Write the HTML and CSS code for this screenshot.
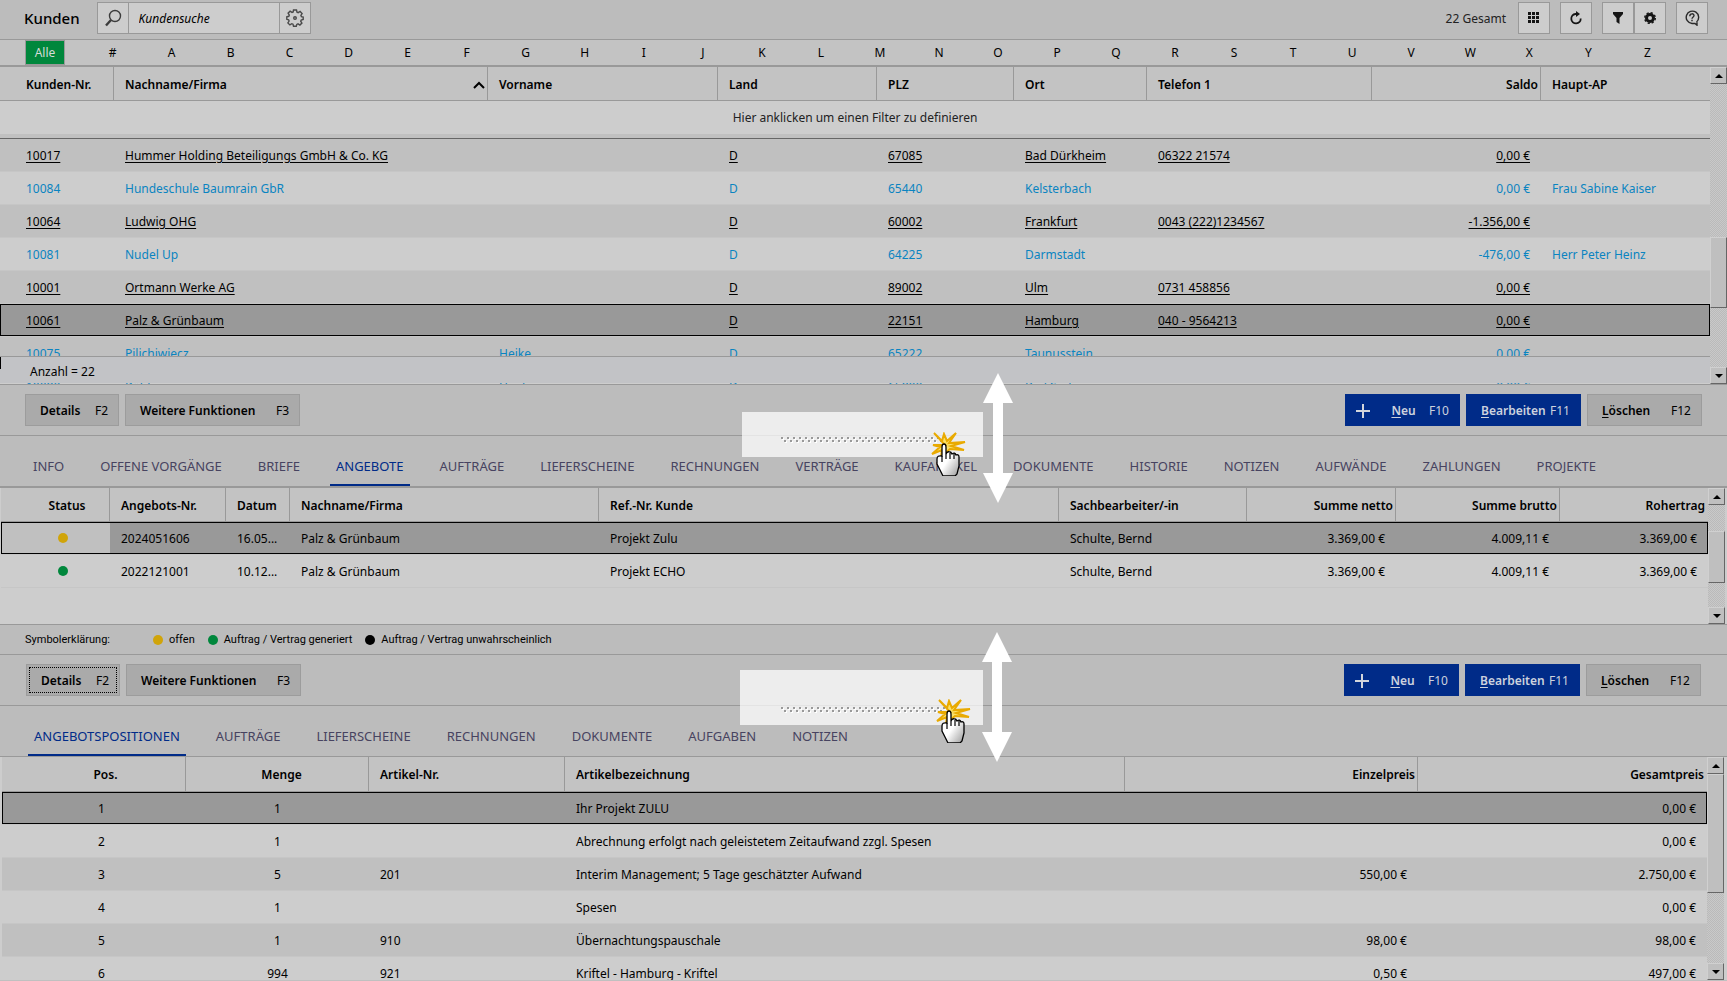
FILE: index.html
```html
<!DOCTYPE html>
<html lang="de">
<head>
<meta charset="utf-8">
<title>Kunden</title>
<link rel="stylesheet" href="styles.css">
</head>
<body>
<svg class="defs" aria-hidden="true">
  <defs>
    <pattern id="grip-dots" width="6" height="7" patternUnits="userSpaceOnUse">
      <path d="M1 1h2v2h-2zM4 4h2v2h-2z" fill="#fff"/>
      <path d="M0 0h2v2h-2zM3 3h2v2h-2z" fill="#999"/>
    </pattern>
    <linearGradient id="hand-fill" x1="0" y1="0" x2="1" y2="1">
      <stop offset=".5" stop-color="#fff"/><stop offset="1" stop-color="#999"/>
    </linearGradient>
    <symbol id="double-arrow" viewBox="0 0 30 130">
      <path d="M15 0 30 30H20V100H30L15 130 0 100H10V30H0Z" fill="#fff"/>
    </symbol>
    <symbol id="click-hand" viewBox="0 0 36 44">
      <path d="M14 13 3 1 11 9 13 2 16 9 25 1 18 11 34 10 20 14 33 18 19 17 10 25 11 18 1 22 9 15 2 13Z" fill="#fbe169" stroke="#e9aa00" stroke-width="2"/>
      <path d="M11 24V15q0-3 2-3t2 3v7q1-3 4-2 1 0 2 2 3-2 4 1 3-1 3 2v9l-2 8-2 2H12L9 38 6 32v-5q0-4 5-3Z" fill="url(#hand-fill)" stroke="#000" stroke-width="1.3"/>
      <path d="M11 24v6M15 22v5M19 21v6M23 22v5" fill="none" stroke="#000" stroke-width="1.2"/>
    </symbol>
    <symbol id="plus" viewBox="0 0 14 14"><path d="M7 0v14M0 7h14" stroke="#d2d5dc" stroke-width="2"/></symbol>
  </defs>
</svg>
<div class="app">
  <header class="topbar">
    <h1 class="title">Kunden</h1>
    <form class="search">
      <button class="icon-btn" type="button" aria-label="Suchen"><svg width="18" height="18" viewBox="0 0 18 18" fill="none" stroke="#3c3c3c"><circle cx="11" cy="7" r="5.5" stroke-width="1.4"/><path d="M7 11 2 16.500" stroke-width="2.400"/></svg></button>
      <input class="search-input" type="text" placeholder="Kundensuche" aria-label="Kundensuche">
      <button class="icon-btn" type="button" aria-label="Sucheinstellungen"><svg width="18" height="18" viewBox="0 0 18 18" fill="none" stroke="#4a4a4a" stroke-width="1.400"><path d="M7.500 1h3l.5 2.200 1.200.5 1.900-1.200 2 2-1.200 1.900.5 1.200 1.800.4v2.500l-2 .5-.5 1.200 1.200 1.900-2 2-1.900-1.200-1.200.5-.5 1.800h-2.800l-.5-2-1.200-.5-1.900 1.200-2-2 1.200-1.900-.5-1.200-1.800-.5v-2.500l2-.5.5-1.200-1.200-1.900 2-2 1.900 1.200 1.200-.5z"/><circle cx="9" cy="9" r="1.300"/></svg></button>
    </form>
    <span class="total">22 Gesamt</span>
    <div class="tools">
      <button class="icon-btn boxed" type="button" aria-label="Spalten"><svg width="12" height="12" viewBox="0 0 12 12" fill="#151515"><path d="M0 0h3v3H0zM4 0h3v3H4zM8 0h3v3H8zM0 4h3v3H0zM4 4h3v3H4zM8 4h3v3H8zM0 8h3v3H0zM4 8h3v3H4zM8 8h3v3H8z"/></svg></button>
      <button class="icon-btn boxed" type="button" aria-label="Aktualisieren"><svg width="14" height="14" viewBox="0 0 14 14" fill="none" stroke="#151515" stroke-width="1.800"><path d="M8 3H6.500a4.700 4.700 0 1 0 5.200 4.500"/><path d="M7 0v6l4-3z" fill="#151515" stroke="none"/></svg></button>
      <div class="pair">
        <button class="icon-btn boxed" type="button" aria-label="Filter"><svg width="12" height="12" viewBox="0 0 12 12" fill="#151515"><path d="M1 0h10v2L7.500 6v6L4.500 10V6L1 2z"/></svg></button>
        <button class="icon-btn boxed" type="button" aria-label="Einstellungen"><svg width="12" height="12" viewBox="0 0 12 12"><circle cx="6" cy="6" r="3.500" fill="none" stroke="#151515" stroke-width="3"/><circle cx="6" cy="6" r="5.300" fill="none" stroke="#151515" stroke-width="1.400" stroke-dasharray="2.200 1.960"/></svg></button>
      </div>
      <button class="icon-btn boxed" type="button" aria-label="Hilfe"><svg width="16" height="16" viewBox="0 0 16 16" fill="none" stroke="#2a2a2a" stroke-width="1.400"><path d="M12.500 12a6.200 6.200 0 1 0-4.500 1.500h3l2 1.700v-3"/><path d="M5.800 6.200C5.800 3 10.200 3.200 10 5.800 9.900 7 8 7 8 8.800M8 9.800v1.400"/></svg></button>
    </div>
  </header>

  <nav class="alphabet" aria-label="Anfangsbuchstabe">
    <button class="letter-all" type="button">Alle</button>
    <div class="letters">
      <button type="button">#</button><button type="button">A</button><button type="button">B</button><button type="button">C</button><button type="button">D</button><button type="button">E</button><button type="button">F</button><button type="button">G</button><button type="button">H</button><button type="button">I</button><button type="button">J</button><button type="button">K</button><button type="button">L</button><button type="button">M</button><button type="button">N</button><button type="button">O</button><button type="button">P</button><button type="button">Q</button><button type="button">R</button><button type="button">S</button><button type="button">T</button><button type="button">U</button><button type="button">V</button><button type="button">W</button><button type="button">X</button><button type="button">Y</button><button type="button">Z</button>
    </div>
  </nav>

  <section class="pane pane-customers">
    <div class="grid-area">
      <table class="grid customers">
        <colgroup><col class="c-nr"><col class="c-name"><col class="c-first"><col class="c-land"><col class="c-plz"><col class="c-ort"><col class="c-tel"><col class="c-saldo"><col></colgroup>
        <thead>
          <tr><th>Kunden-Nr.</th><th><span class="sorted">Nachname/Firma<svg width="12" height="8" viewBox="0 0 12 8" fill="none" stroke="#000" stroke-width="2"><path d="M1 7l5-5 5 5"/></svg></span></th><th>Vorname</th><th>Land</th><th>PLZ</th><th>Ort</th><th>Telefon 1</th><th class="num">Saldo</th><th>Haupt-AP</th></tr>
        </thead>
        <tbody>
          <tr class="filter"><td colspan="9">Hier anklicken um einen Filter zu definieren</td></tr>
          <tr class="alt firm"><td><a href="#">10017</a></td><td><a href="#">Hummer Holding Beteiligungs GmbH &amp; Co. KG</a></td><td></td><td><a href="#">D</a></td><td><a href="#">67085</a></td><td><a href="#">Bad Dürkheim</a></td><td><a href="#">06322 21574</a></td><td class="num"><a href="#">0,00 €</a></td><td></td></tr>
          <tr class="lead"><td>10084</td><td>Hundeschule Baumrain GbR</td><td></td><td>D</td><td>65440</td><td>Kelsterbach</td><td></td><td class="num">0,00 €</td><td>Frau Sabine Kaiser</td></tr>
          <tr class="alt firm"><td><a href="#">10064</a></td><td><a href="#">Ludwig OHG</a></td><td></td><td><a href="#">D</a></td><td><a href="#">60002</a></td><td><a href="#">Frankfurt</a></td><td><a href="#">0043 (222)1234567</a></td><td class="num"><a href="#">-1.356,00 €</a></td><td></td></tr>
          <tr class="lead"><td>10081</td><td>Nudel Up</td><td></td><td>D</td><td>64225</td><td>Darmstadt</td><td></td><td class="num">-476,00 €</td><td>Herr Peter Heinz</td></tr>
          <tr class="alt firm"><td><a href="#">10001</a></td><td><a href="#">Ortmann Werke AG</a></td><td></td><td><a href="#">D</a></td><td><a href="#">89002</a></td><td><a href="#">Ulm</a></td><td><a href="#">0731 458856</a></td><td class="num"><a href="#">0,00 €</a></td><td></td></tr>
          <tr class="selected firm"><td><a href="#">10061</a></td><td><a href="#">Palz &amp; Grünbaum</a></td><td></td><td><a href="#">D</a></td><td><a href="#">22151</a></td><td><a href="#">Hamburg</a></td><td><a href="#">040 - 9564213</a></td><td class="num"><a href="#">0,00 €</a></td><td></td></tr>
          <tr class="alt lead"><td>10075</td><td>Pilichiwiecz</td><td>Heike</td><td>D</td><td>65222</td><td>Taunusstein</td><td></td><td class="num">0,00 €</td><td></td></tr>
          <tr class="lead"><td>10080</td><td>Röhl</td><td>Heidi</td><td>D</td><td>65800</td><td>Bad Soden</td><td></td><td class="num">0,00 €</td><td></td></tr>
        </tbody>
      </table>
      <div class="summary">Anzahl = 22</div>
    </div>
    <div class="scrollbar" aria-hidden="true"><i class="up"></i><i class="space sp-153"></i><i class="thumb th-71"></i><i class="space grow"></i><i class="down"></i></div>
  </section>

  <section class="actions">
    <button class="btn" type="button"><b>Details</b><span>F2</span></button>
    <button class="btn wide" type="button"><b>Weitere Funktionen</b><span>F3</span></button>
    <div class="actions-right">
      <button class="btn primary new" type="button"><svg width="14" height="14"><use href="#plus"/></svg><b><u>N</u>eu</b><span>F10</span></button>
      <button class="btn primary" type="button"><b><u>B</u>earbeiten</b><span>F11</span></button>
      <button class="btn" type="button"><b><u>L</u>öschen</b><span>F12</span></button>
    </div>
    <div class="hint hint-top"><div class="spot"></div><svg class="grip" width="165" height="7"><rect width="165" height="7" fill="url(#grip-dots)"/></svg></div>
  </section>

  <nav class="tabs tabs-top">
    <a href="#">INFO</a><a href="#">OFFENE VORGÄNGE</a><a href="#">BRIEFE</a><a href="#" class="active">ANGEBOTE</a><a href="#">AUFTRÄGE</a><a href="#">LIEFERSCHEINE</a><a href="#">RECHNUNGEN</a><a href="#">VERTRÄGE</a><a href="#">KAUFARTIKEL</a><a href="#">DOKUMENTE</a><a href="#">HISTORIE</a><a href="#">NOTIZEN</a><a href="#">AUFWÄNDE</a><a href="#">ZAHLUNGEN</a><a href="#">PROJEKTE</a>
    <svg class="hand" width="36" height="44"><use href="#click-hand"/></svg>
    <svg class="arrow" width="30" height="130"><use href="#double-arrow"/></svg>
  </nav>

  <section class="pane pane-offers">
    <div class="grid-area">
      <table class="grid offers">
        <colgroup><col class="o-status"><col class="o-nr"><col class="o-date"><col class="o-name"><col class="o-ref"><col class="o-clerk"><col class="o-net"><col class="o-gross"><col></colgroup>
        <thead><tr><th>Status</th><th>Angebots-Nr.</th><th>Datum</th><th>Nachname/Firma</th><th>Ref.-Nr. Kunde</th><th>Sachbearbeiter/-in</th><th class="num">Summe netto</th><th class="num">Summe brutto</th><th class="num">Rohertrag</th></tr></thead>
        <tbody>
          <tr class="selected"><td><i class="dot yellow"></i></td><td>2024051606</td><td>16.05...</td><td>Palz &amp; Grünbaum</td><td>Projekt Zulu</td><td>Schulte, Bernd</td><td class="num">3.369,00 €</td><td class="num">4.009,11 €</td><td class="num">3.369,00 €</td></tr>
          <tr><td><i class="dot green"></i></td><td>2022121001</td><td>10.12...</td><td>Palz &amp; Grünbaum</td><td>Projekt ECHO</td><td>Schulte, Bernd</td><td class="num">3.369,00 €</td><td class="num">4.009,11 €</td><td class="num">3.369,00 €</td></tr>
        </tbody>
      </table>
    </div>
    <div class="scrollbar" aria-hidden="true"><i class="up"></i><i class="space sp-26"></i><i class="thumb th-52"></i><i class="space grow"></i><i class="down"></i></div>
  </section>

  <div class="legend"><span class="legend-title">Symbolerklärung:</span><span><i class="dot yellow"></i>offen</span><span><i class="dot green"></i>Auftrag / Vertrag generiert</span><span><i class="dot black"></i>Auftrag / Vertrag unwahrscheinlich</span></div>

  <section class="actions inset">
    <button class="btn focused" type="button"><b>Details</b><span>F2</span></button>
    <button class="btn wide" type="button"><b>Weitere Funktionen</b><span>F3</span></button>
    <div class="actions-right">
      <button class="btn primary new" type="button"><svg width="14" height="14"><use href="#plus"/></svg><b><u>N</u>eu</b><span>F10</span></button>
      <button class="btn primary" type="button"><b><u>B</u>earbeiten</b><span>F11</span></button>
      <button class="btn" type="button"><b><u>L</u>öschen</b><span>F12</span></button>
    </div>
    <div class="hint hint-bottom"><div class="spot"></div><svg class="grip" width="165" height="7"><rect width="165" height="7" fill="url(#grip-dots)"/></svg></div>
  </section>

  <nav class="tabs tabs-bottom inset">
    <a href="#" class="active">ANGEBOTSPOSITIONEN</a><a href="#">AUFTRÄGE</a><a href="#">LIEFERSCHEINE</a><a href="#">RECHNUNGEN</a><a href="#">DOKUMENTE</a><a href="#">AUFGABEN</a><a href="#">NOTIZEN</a>
    <svg class="hand" width="36" height="44"><use href="#click-hand"/></svg>
    <svg class="arrow" width="30" height="130"><use href="#double-arrow"/></svg>
  </nav>

  <section class="pane pane-items">
    <div class="grid-area">
      <table class="grid items">
        <colgroup><col class="i-pos"><col class="i-qty"><col class="i-nr"><col class="i-text"><col class="i-unit"><col></colgroup>
        <thead><tr><th>Pos.</th><th>Menge</th><th>Artikel-Nr.</th><th>Artikelbezeichnung</th><th class="num">Einzelpreis</th><th class="num">Gesamtpreis</th></tr></thead>
        <tbody>
          <tr class="selected"><td>1</td><td>1</td><td></td><td>Ihr Projekt ZULU</td><td></td><td class="num">0,00 €</td></tr>
          <tr><td>2</td><td>1</td><td></td><td>Abrechnung erfolgt nach geleistetem Zeitaufwand zzgl. Spesen</td><td></td><td class="num">0,00 €</td></tr>
          <tr class="alt"><td>3</td><td>5</td><td>201</td><td>Interim Management; 5 Tage geschätzter Aufwand</td><td class="num">550,00 €</td><td class="num">2.750,00 €</td></tr>
          <tr><td>4</td><td>1</td><td></td><td>Spesen</td><td></td><td class="num">0,00 €</td></tr>
          <tr class="alt"><td>5</td><td>1</td><td>910</td><td>Übernachtungspauschale</td><td class="num">98,00 €</td><td class="num">98,00 €</td></tr>
          <tr><td>6</td><td>994</td><td>921</td><td>Kriftel - Hamburg - Kriftel</td><td class="num">0,50 €</td><td class="num">497,00 €</td></tr>
        </tbody>
      </table>
    </div>
    <div class="scrollbar" aria-hidden="true"><i class="up"></i><i class="thumb th-119"></i><i class="space grow"></i><i class="down"></i></div>
  </section>
</div>
</body>
</html>
```
FILE: styles.css
```css
* { box-sizing: border-box; }
:root {
  --line: #999;
  --bar: #bcbcbc;
  --head: #c3c3c3;
  --light: #cdcdcd;
  --alt: #c0c0c0;
  --navy: #002b88;
}
body {
  margin: 0;
  background: var(--bar);
  color: #000;
  font-family: "Noto Sans", "Open Sans", sans-serif;
  font-size: 12px;
  line-height: 16px;
}
button, input { font: inherit; color: inherit; }
button { cursor: pointer; }
.defs { position: absolute; width: 0; height: 0; }
.app { display: flex; flex-direction: column; height: 100vh; overflow: hidden; }

.topbar { display: flex; align-items: center; flex: none; height: 40px; padding: 0 19px 4px 24px; border-bottom: 1px solid var(--line); }
.title { margin: 0; font-size: 15px; font-weight: 500; }
.search { display: flex; height: 32px; margin-left: 17px; border: 1px solid var(--line); background: var(--light); }
.icon-btn { display: flex; align-items: center; justify-content: center; width: 30px; padding: 0; border: 0; background: var(--light); }
.search-input { width: 152px; padding: 2px 10px 0; border: solid var(--line); border-width: 0 1px; border-radius: 0; background: var(--light); font-style: italic; outline: 0; }
.search-input::placeholder { color: #000; opacity: 1; }
.total { margin-left: auto; padding-top: 2px; color: #222; }
.tools { display: flex; gap: 10px; margin-left: 12px; }
.pair { display: flex; }
.boxed { width: 32px; height: 32px; border: 1px solid var(--line); }

.alphabet { display: flex; align-items: center; flex: none; height: 27px; padding: 0 50px 0 25px; border-bottom: 2px solid var(--line); background: var(--head); }
.alphabet button { padding: 0; border: 0; background: none; }
.alphabet .letter-all { width: 40px; height: 25px; border: 1px solid var(--line); background: #00873c; color: #d5dcd8; }
.letters { display: flex; flex: 1; margin-left: 18px; }
.letters button { flex: 1 1 0; }

.pane { display: flex; flex: none; border-bottom: 1px solid var(--line); background: var(--light); }
.pane-customers { height: 318px; }
.pane-offers { height: 137px; padding: 0 2px 0 1px; }
.pane-items { flex: 1; min-height: 0; padding: 0 3px 0 2px; border-bottom-color: var(--alt); }
.grid-area { position: relative; flex: 1; min-width: 0; overflow: hidden; }

.grid { width: 100%; table-layout: fixed; border-collapse: separate; border-spacing: 0; }
.grid th { height: 34px; padding: 2px 2px 0 11px; border: solid var(--line); border-width: 0 1px 1px 0; background: var(--head); font-weight: 600; text-align: left; white-space: nowrap; }
.grid th:last-child { border-right: 0; padding-right: 3px; }
.grid td { height: 33px; padding: 2px 11px 0; border-bottom: 1px solid #c6c6c6; white-space: nowrap; overflow: hidden; }
.grid .num { text-align: right; }
.grid a { color: inherit; text-underline-offset: 2px; }
.grid .alt td { background: var(--alt); }
.grid .selected td { background: #999; box-shadow: inset 0 1px #000, inset 0 -1px #000; }
.grid .selected td:first-child { box-shadow: inset 1px 1px #000, inset 0 -1px #000; }
.grid .selected td:last-child { box-shadow: inset 0 1px #000, inset -1px -1px #000; }
.grid .lead { color: #0a84c1; }

.customers th:first-child, .customers td:first-child { padding-left: 26px; }
.sorted { display: flex; align-items: center; justify-content: space-between; }
.customers .filter td { height: 38px; padding: 0 0 4px; border-bottom: 1px solid #666; text-align: center; color: #222; box-shadow: inset 0 -4px var(--alt); }
.c-nr { width: 114px; } .c-name { width: 374px; } .c-first { width: 230px; } .c-land { width: 159px; } .c-plz { width: 137px; } .c-ort { width: 133px; } .c-tel { width: 225px; } .c-saldo { width: 169px; }
.summary { position: absolute; right: 0; bottom: 1px; left: 0; height: 27px; padding: 7px 30px 0; border-top: 1px solid var(--line); background: #c2c3c6; }
.summary::before { content: ""; position: absolute; top: 0; left: 0; width: 1px; height: 12px; background: #000; }

.o-status { width: 109px; } .o-nr { width: 116px; } .o-date { width: 64px; } .o-name { width: 309px; } .o-ref { width: 460px; } .o-clerk { width: 188px; } .o-net { width: 149px; } .o-gross { width: 164px; }
.offers th:first-child { padding-left: 26px; text-align: center; }
.offers td:first-child { padding: 0 0 0 14px; text-align: center; }
.offers .selected td:first-child { background: var(--alt); }
.i-pos { width: 184px; } .i-qty { width: 183px; } .i-nr { width: 196px; } .i-text { width: 560px; } .i-unit { width: 293px; }
.grid.items th { height: 35px; }
.items th:nth-child(-n+2), .items td:nth-child(-n+2) { text-align: center; }
.items th:first-child, .items td:first-child { padding-left: 26px; }

.dot { display: block; width: 10px; height: 10px; border-radius: 50%; }
.offers .dot { margin: 0 auto; }
.yellow { background: #d0a40a; }
.green { background: #00873c; }
.black { background: #000; }

.scrollbar { display: flex; flex-direction: column; flex: none; width: 17px; background: repeating-conic-gradient(#c9c9c9 0 25%, #bababa 0 50%) 0 0 / 2px 2px; }
.up, .down, .thumb { flex: none; border: 1px solid; border-color: #d0d0d0 #666 #666 #d0d0d0; background: #bfbfbf; }
.up, .down { display: flex; align-items: center; justify-content: center; height: 17px; }
.up::before, .down::before { content: ""; border: 4px solid transparent; }
.up::before { border-top: 0; border-bottom-color: #000; }
.down::before { border-bottom: 0; border-top-color: #000; }
.space { flex: none; }
.sp-153 { height: 153px; } .sp-26 { height: 26px; }
.grow { flex: 1; }
.th-71 { height: 71px; } .th-52 { height: 52px; } .th-119 { height: 119px; }

.actions { position: relative; display: flex; align-items: center; gap: 6px; flex: none; height: 51px; padding: 0 25px; border-bottom: 1px solid var(--line); }
.actions.inset { padding: 0 26px; }
.actions-right { display: flex; gap: 6px; margin-left: auto; }
.btn { display: flex; align-items: center; justify-content: space-between; width: 94px; height: 32px; padding: 1px 10px 0 14px; border: 1px solid #9c9c9c; background: #aaa; white-space: nowrap; }
.btn b { font-weight: 600; }
.btn u { text-underline-offset: 2px; }
.btn.wide { width: 175px; }
.actions-right .btn { width: 115px; }
.btn.primary { border-color: var(--navy); background: var(--navy); color: #ccd2de; }
.btn.new { padding-left: 10px; }
.btn.new b { margin-left: 8px; }
.btn.focused { outline: 1px dotted #000; outline-offset: -4px; }

.hint { position: absolute; inset: 0; pointer-events: none; }
.spot { position: absolute; left: calc(50% - 122px); width: 241px; height: 45px; top: 27px; background: rgba(255, 255, 255, .73); }
.hint-bottom .spot { left: calc(50% - 124px); width: 243px; top: 15px; height: 55px; }
.grip { position: absolute; left: calc(50% - 83px); top: 52px; }
.hand, .arrow { position: absolute; pointer-events: none; z-index: 2; }

.tabs { position: relative; display: flex; align-items: stretch; gap: 24px; flex: none; height: 52px; padding-left: 27px; border-bottom: 2px solid var(--line); }
.tabs a { display: flex; align-items: center; padding: 12px 6px 0; border-bottom: 2px solid transparent; color: #474360; text-decoration: none; font-size: 13px; white-space: nowrap; }
.tabs a.active { border-color: var(--navy); color: var(--navy); }
.tabs-bottom { height: 51px; padding-left: 28px; border-bottom-width: 1px; }
.tabs-top .hand { left: calc(50% + 67px); top: -4px; }
.tabs-top .arrow { left: calc(50% + 119px); top: -63px; }
.tabs-bottom .hand { left: calc(50% + 72px); top: -7px; }
.tabs-bottom .arrow { left: calc(50% + 118px); top: -74px; }

.legend { display: flex; align-items: center; gap: 13px; flex: none; height: 30px; padding: 1px 0 0 25px; border-bottom: 1px solid var(--line); font-family: Roboto, sans-serif; font-size: 11px; }
.legend-title { margin-right: 30px; }
.legend span { display: flex; align-items: center; gap: 6px; }
```
